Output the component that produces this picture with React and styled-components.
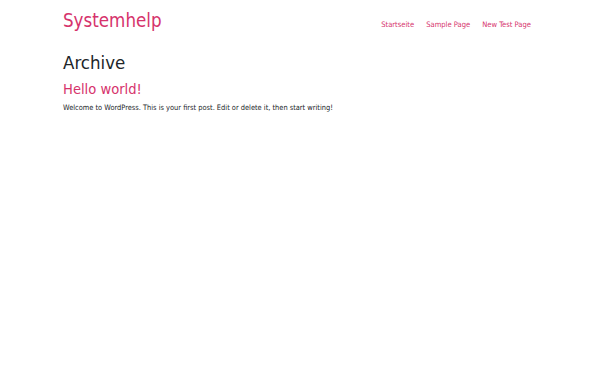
import React from 'react'
import styled, { createGlobalStyle } from 'styled-components'

const GlobalStyle = createGlobalStyle`
  body {
    margin: 0;
    background: #fff;
    color: #212529;
    font-family: "DejaVu Sans", "Liberation Sans", sans-serif;
    font-stretch: condensed;
  }
`

const Container = styled.div`
  max-width: 474px;
  margin: 0 auto;
`

const Header = styled.header`
  display: flex;
  justify-content: space-between;
  align-items: baseline;
  padding-top: 10px;
`

const Brand = styled.a`
  color: #d6336c;
  font-size: 18.6px;
  line-height: 1.2;
  text-decoration: none;
`

const Nav = styled.nav`
  display: flex;
`

const NavLink = styled.a`
  padding: 0 6px;
  color: #d6336c;
  font-size: 7.55px;
  line-height: 1.5;
  text-decoration: none;
`

const Main = styled.main`
  padding-top: 20px;
`

const PageTitle = styled.h1`
  margin: 0;
  font-size: 18.5px;
  font-weight: 400;
  line-height: 1.2;
  color: #212529;
`

const PostTitle = styled.h2`
  margin: 5px 0 0;
  font-size: 14.6px;
  font-weight: 400;
  line-height: 1.2;

  a {
    color: #d6336c;
    text-decoration: none;
  }
`

const Excerpt = styled.p`
  margin: 5px 0 0;
  font-size: 7.4px;
  line-height: 1.5;
`

const links = ['Startseite', 'Sample Page', 'New Test Page']

const App = () => {
    return (
        <Container>
            <GlobalStyle />
            <Header>
                <Brand href="#">Systemhelp</Brand>
                <Nav>
                    {links.map(l => (
                        <NavLink key={l} href="#">{l}</NavLink>
                    ))}
                </Nav>
            </Header>
            <Main>
                <PageTitle>Archive</PageTitle>
                <article>
                    <PostTitle><a href="#">Hello world!</a></PostTitle>
                    <Excerpt>Welcome to WordPress. This is your first post. Edit or delete it, then start writing!</Excerpt>
                </article>
            </Main>
        </Container>
    )
}

export default App
